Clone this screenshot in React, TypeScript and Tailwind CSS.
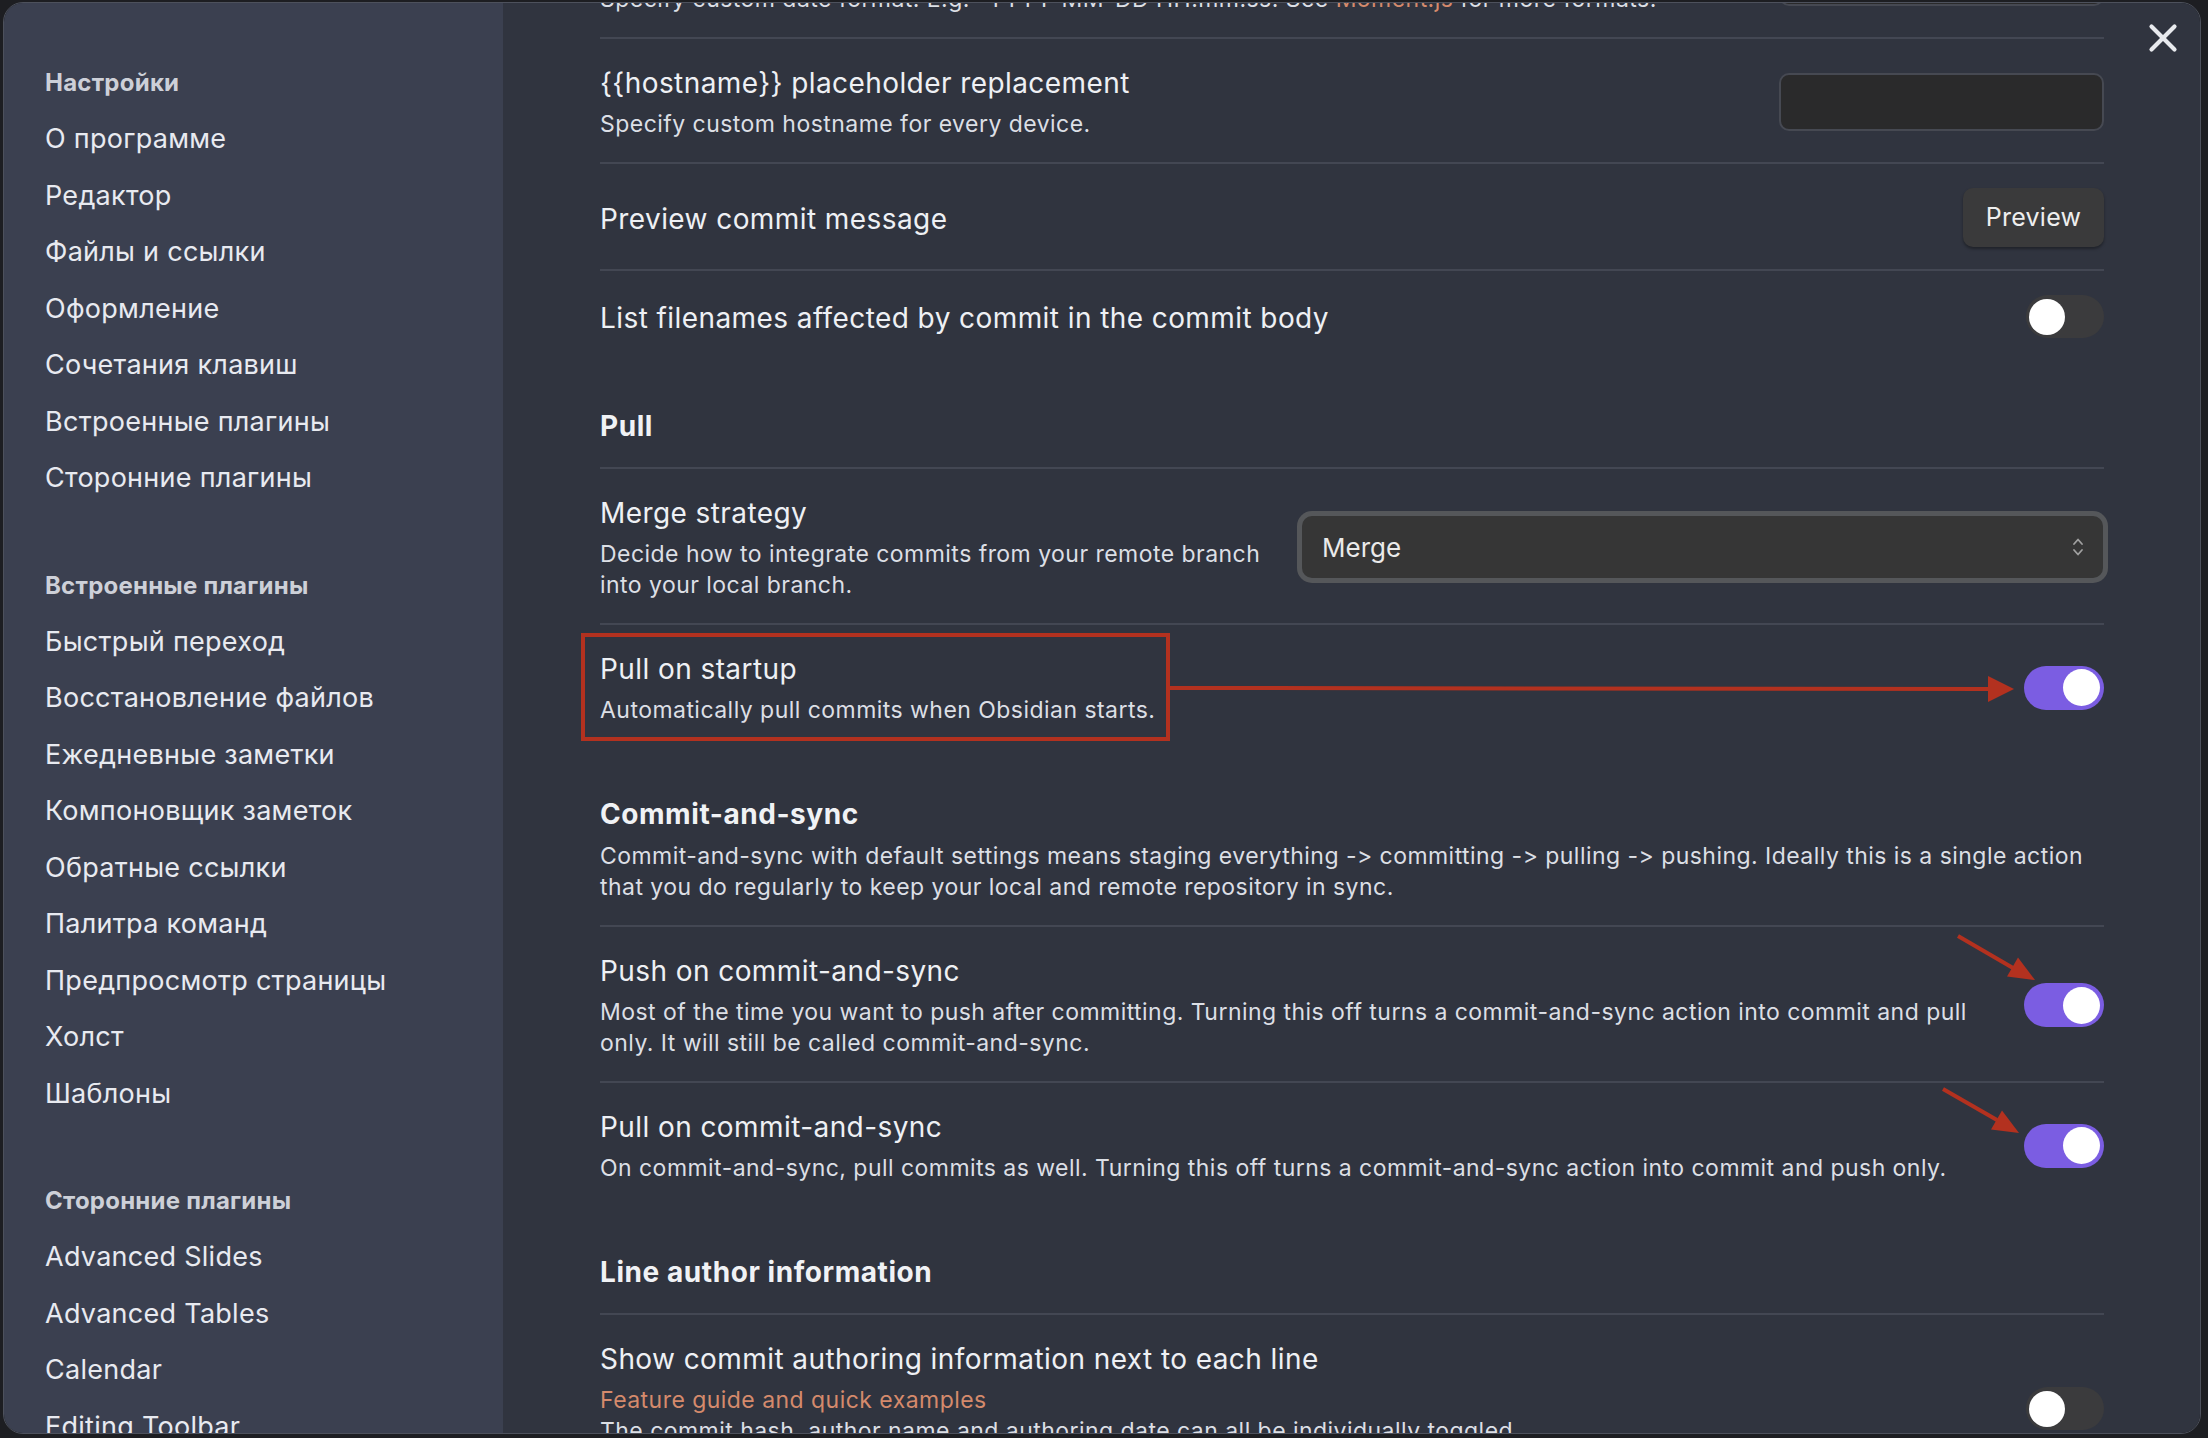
import React from "react";
import { X } from "lucide-react";

const groups = [
  {
    title: "Настройки",
    items: ["О программе", "Редактор", "Файлы и ссылки", "Оформление", "Сочетания клавиш", "Встроенные плагины", "Сторонние плагины"],
  },
  {
    title: "Встроенные плагины",
    items: [
      "Быстрый переход",
      "Восстановление файлов",
      "Ежедневные заметки",
      "Компоновщик заметок",
      "Обратные ссылки",
      "Палитра команд",
      "Предпросмотр страницы",
      "Холст",
      "Шаблоны",
    ],
  },
  {
    title: "Сторонние плагины",
    items: ["Advanced Slides", "Advanced Tables", "Calendar", "Editing Toolbar", "Git", "Homepage"],
  },
];

const Toggle = ({ on }: { on?: boolean }) =>
  on ? (
    <div className="flex h-[44px] w-[80px] shrink-0 items-center justify-end rounded-full bg-[#7b5de2] px-[4px]">
      <div className="h-[37px] w-[37px] rounded-full bg-white" />
    </div>
  ) : (
    <div className="flex h-[43px] w-[78px] shrink-0 items-center justify-start rounded-full bg-[#3b3b3d] px-[3px]">
      <div className="h-[36px] w-[36px] rounded-full bg-white" />
    </div>
  );

const TextInput = () => (
  <div className="h-[58px] w-[325px] shrink-0 rounded-[10px] border-2 border-[#464952] bg-[#2a2a2b]" />
);

interface RowProps {
  title: React.ReactNode;
  desc?: React.ReactNode;
  control?: React.ReactNode;
}

const Row = ({ title, desc, control }: RowProps) => (
  <div className="flex items-center border-t-2 border-[#434753] pt-[24px] pb-[22px]">
    <div className="mt-[2px] min-w-0 flex-1 pr-[20px]">
      <div className="text-[28px] leading-[36px] tracking-[0.015em] text-[#eef0f4]">{title}</div>
      {desc && (
        <div className="mt-[8px] text-[23px] leading-[31px] tracking-[0.02em] text-[#dcdfe5]">{desc}</div>
      )}
    </div>
    {control}
  </div>
);

const Heading = ({ title, desc }: { title: string; desc?: string }) => (
  <div className={desc ? "pt-[49px] pb-[22px]" : "pt-[49px] pb-[24px]"}>
    <div className="text-[28px] leading-[34px] font-bold tracking-[0.02em] text-[#f0f2f5]">{title}</div>
    {desc && (
      <div className="mt-[10px] text-[23px] leading-[31px] tracking-[0.02em] text-[#dcdfe5]">{desc}</div>
    )}
  </div>
);

export default function App() {
  return (
    <div className="relative h-[1438px] w-[2208px] overflow-hidden bg-[#1d1e22] pt-[2px] pl-[3px] font-[family-name:Inter,sans-serif] [font-feature-settings:'calt'_0]">
      <div className="flex h-[1432px] w-[2198px] overflow-hidden rounded-[20px] border border-[#4d515c]">
        <aside className="w-[499px] shrink-0 overflow-hidden bg-[#3b4050] pt-[52px] pl-[41px]">
          {groups.map((g, gi) => (
            <div key={g.title} className={gi > 0 ? "mt-[51px]" : ""}>
              <div className="flex h-[56px] items-center text-[24px] font-bold tracking-[0.01em] text-[#cdd0d8]">
                {g.title}
              </div>
              {g.items.map((it) => (
                <div key={it} className="flex h-[56.5px] items-center text-[27px] tracking-[0.01em] text-[#e8eaf0]">
                  {it}
                </div>
              ))}
            </div>
          ))}
        </aside>

        <main className="relative flex-1 overflow-hidden bg-[#30343f] pr-[96px] pl-[97px]">
          <button className="absolute top-[12px] right-[14px] text-[#e8eaee]">
            <X size={46} strokeWidth={2.2} />
          </button>

          <div className="-mt-[91px]">
            <Row
              title="Custom date format"
              desc={
                <>
                  Specify custom date format. E.g. "YYYY-MM-DD HH:mm:ss. See{" "}
                  <span className="text-[#d58a6c]">Moment.js</span> for more formats.
                </>
              }
              control={<TextInput />}
            />
            <Row
              title={"{{hostname}} placeholder replacement"}
              desc="Specify custom hostname for every device."
              control={<TextInput />}
            />
            <Row
              title="Preview commit message"
              control={
                <button className="h-[59px] w-[141px] shrink-0 rounded-[10px] bg-[#3a3a3b] text-[25px] tracking-[0.01em] text-[#eeeeee] shadow-[0_2px_3px_rgba(0,0,0,0.35)]">
                  Preview
                </button>
              }
            />
            <Row title="List filenames affected by commit in the commit body" control={<Toggle />} />

            <Heading title="Pull" />
            <Row
              title="Merge strategy"
              desc="Decide how to integrate commits from your remote branch into your local branch."
              control={
                <div className="mr-[1px] flex h-[62px] w-[801px] shrink-0 items-center justify-between rounded-[10px] bg-[#363636] pr-[18px] pl-[20px] ring-[5px] ring-[#55575a]">
                  <span className="text-[26px] text-[#eaeaea]">Merge</span>
                  <svg width="14" height="22" viewBox="0 0 14 22" fill="none" stroke="#a0a0a0" strokeWidth="1.8" strokeLinecap="round" strokeLinejoin="round">
                    <path d="M3 8 L7 3.5 L11 8" />
                    <path d="M3 14 L7 18.5 L11 14" />
                  </svg>
                </div>
              }
            />
            <Row
              title="Pull on startup"
              desc="Automatically pull commits when Obsidian starts."
              control={<Toggle on />}
            />

            <Heading
              title="Commit-and-sync"
              desc="Commit-and-sync with default settings means staging everything -> committing -> pulling -> pushing. Ideally this is a single action that you do regularly to keep your local and remote repository in sync."
            />
            <Row
              title="Push on commit-and-sync"
              desc="Most of the time you want to push after committing. Turning this off turns a commit-and-sync action into commit and pull only. It will still be called commit-and-sync."
              control={<Toggle on />}
            />
            <Row
              title="Pull on commit-and-sync"
              desc="On commit-and-sync, pull commits as well. Turning this off turns a commit-and-sync action into commit and push only."
              control={<Toggle on />}
            />

            <Heading title="Line author information" />
            <Row
              title="Show commit authoring information next to each line"
              desc={
                <>
                  <span className="text-[#d58a6c]">Feature guide and quick examples</span>
                  <br />
                  The commit hash, author name and authoring date can all be individually toggled.
                  <br />
                  Hide everything, to only show the age-colored sidebar.
                </>
              }
              control={<Toggle />}
            />
          </div>
        </main>
      </div>

      {/* annotations */}
      <svg className="pointer-events-none absolute inset-0" width="2208" height="1438" viewBox="0 0 2208 1438">
        <rect x="583" y="635" width="585" height="104" fill="none" stroke="#b3311f" strokeWidth="4" />
        <line x1="1170" y1="688" x2="1992" y2="689" stroke="#b3311f" strokeWidth="4" />
        <polygon points="1988,676 2014,689 1988,702" fill="#b3311f" />
        <line x1="1958" y1="936" x2="2013" y2="968" stroke="#b3311f" strokeWidth="4" />
        <polygon points="2018,957.6 2035,980 2007,976.6" fill="#b3311f" />
        <line x1="1943" y1="1089" x2="1997" y2="1120" stroke="#b3311f" strokeWidth="4" />
        <polygon points="2002,1110.5 2019,1133 1991,1129.5" fill="#b3311f" />
      </svg>
    </div>
  );
}
